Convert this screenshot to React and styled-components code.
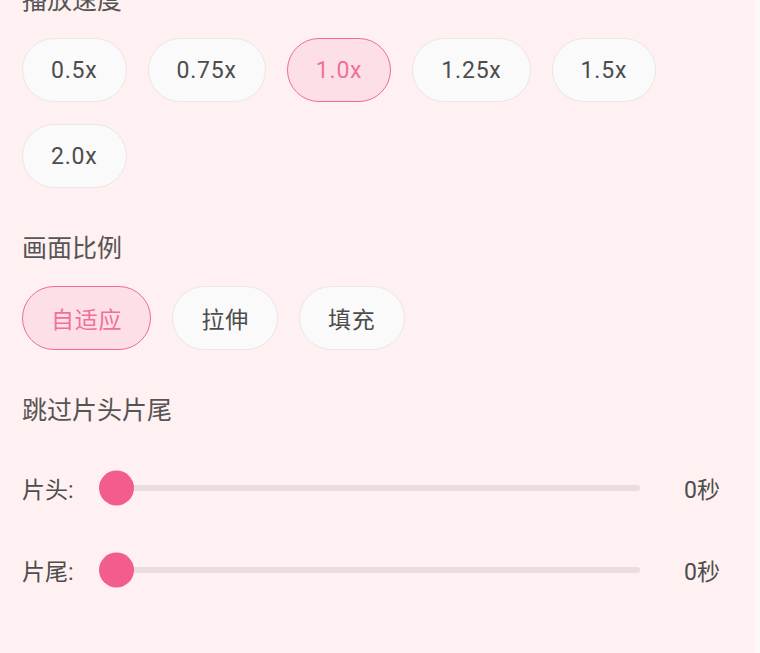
import React, { useState } from 'react';
import styled, { createGlobalStyle } from 'styled-components';

const GlobalStyle = createGlobalStyle`
  html, body {
    margin: 0;
    padding: 0;
    background: #fdf8f8;
    overflow: hidden;
  }
  body {
    font-family: Roboto, "Noto Sans CJK SC", sans-serif;
  }
`;

const Panel = styled.div`
  width: 755px;
  min-height: 670px;
  margin-top: -17px;
  box-sizing: border-box;
  padding: 0 35px 0 22px;
  background: #fff0f1;
  display: flex;
  flex-direction: column;
  gap: 43px;
`;

const Section = styled.section`
  display: flex;
  flex-direction: column;
  gap: 19px;
`;

const SectionTitle = styled.div`
  font-size: 25px;
  line-height: 36px;
  color: #555;
`;

const ChipRow = styled.div`
  display: flex;
  flex-wrap: wrap;
  gap: 22px 21px;
`;

const Chip = styled.button`
  height: 64px;
  padding: 0 28px;
  border-radius: 32px;
  box-sizing: border-box;
  border: 1.5px solid ${p => (p.$active ? '#f06b96' : '#ebe6e7')};
  background: ${p => (p.$active ? '#fde0e7' : '#fafafa')};
  color: ${p => (p.$active ? '#f0709a' : '#4d4d4d')};
  font-family: Roboto, "Noto Sans CJK SC", sans-serif;
  font-size: 23px;
  letter-spacing: 0.8px;
  cursor: pointer;
`;

const SliderList = styled.div`
  display: flex;
  flex-direction: column;
  gap: 42px;
  margin-top: 20px;
`;

const SliderRow = styled.div`
  display: flex;
  align-items: center;
  height: 40px;
  gap: 22px;
`;

const SliderLabel = styled.span`
  font-size: 23px;
  color: #4d4d4d;
  width: 55px;
`;

const Track = styled.div`
  position: relative;
  flex: 1;
  height: 6px;
  border-radius: 3px;
  background: #eadde2;
`;

const Thumb = styled.div`
  position: absolute;
  top: 50%;
  width: 35px;
  height: 35px;
  border-radius: 50%;
  background: #f25d8c;
  transform: translateY(-50%);
`;

const SliderValue = styled.span`
  width: 58px;
  text-align: right;
  font-size: 23px;
  color: #4d4d4d;
`;

const speeds = ['0.5x', '0.75x', '1.0x', '1.25x', '1.5x', '2.0x'];
const ratios = ['自适应', '拉伸', '填充'];

const Slider = ({ label, value, max }) => (
  <SliderRow>
    <SliderLabel>{label}</SliderLabel>
    <Track>
      <Thumb style={{ left: `calc(${(value / max) * 100}% - ${(value / max) * 35}px)` }} />
    </Track>
    <SliderValue>{value}秒</SliderValue>
  </SliderRow>
);

export default function App() {
  const [speed, setSpeed] = useState('1.0x');
  const [ratio, setRatio] = useState('自适应');

  return (
    <>
      <GlobalStyle />
      <Panel>
        <Section>
          <SectionTitle>播放速度</SectionTitle>
          <ChipRow>
            {speeds.map(s => (
              <Chip key={s} $active={s === speed} onClick={() => setSpeed(s)}>{s}</Chip>
            ))}
          </ChipRow>
        </Section>

        <Section>
          <SectionTitle>画面比例</SectionTitle>
          <ChipRow>
            {ratios.map(r => (
              <Chip key={r} $active={r === ratio} onClick={() => setRatio(r)}>{r}</Chip>
            ))}
          </ChipRow>
        </Section>

        <Section>
          <SectionTitle>跳过片头片尾</SectionTitle>
          <SliderList>
            <Slider label="片头:" value={0} max={120} />
            <Slider label="片尾:" value={0} max={120} />
          </SliderList>
        </Section>
      </Panel>
    </>
  );
}
